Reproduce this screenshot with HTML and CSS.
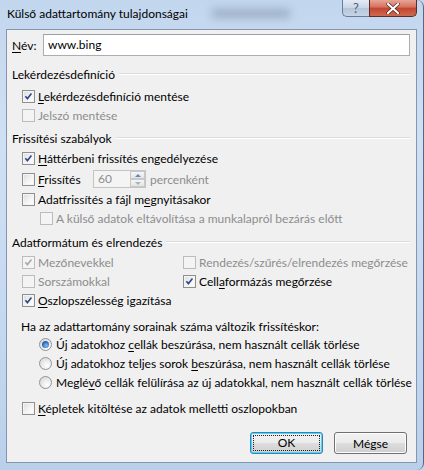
FILE: index.html
```html
<!DOCTYPE html>
<html lang="hu">
<head>
  <meta charset="UTF-8" />
  <title>Külső adattartomány tulajdonságai</title>
  <link rel="stylesheet" href="styles.css">
</head>
<body>
  <div class="window">
    <div class="titlebar">
      <span class="title">Külső adattartomány tulajdonságai</span>
      <span class="glass-blur"></span>
      <div class="caption-btns">
        <span class="cap-help">?</span>
        <span class="cap-close">
          <svg width="14" height="11" viewBox="0 0 14 11">
            <path d="M2 1 L12 10 M12 1 L2 10" stroke="#4b2020" stroke-width="3.4" stroke-linecap="round" />
            <path d="M2 1 L12 10 M12 1 L2 10" stroke="#fff" stroke-width="2.2" stroke-linecap="round" />
          </svg>
        </span>
      </div>
    </div>

    <div class="client">
      <div class="name-row">
        <label class="name-label"><u>N</u>év:</label>
        <div class="textbox">www.bing</div>
      </div>

      <div class="group-title s1"><span>Lekérdezésdefiníció</span></div>
      <div class="row ind1 first">
        <span class="cb checked"><svg viewBox="0 0 13 13"><path d="M2.8 6.2 L5.2 9 L10 3" /></svg></span>
        <span><u>L</u>ekérdezésdefiníció mentése</span>
      </div>
      <div class="row ind1 disabled">
        <span class="cb"></span>
        <span>Jelszó mentése</span>
      </div>

      <div class="group-title s2"><span>Frissítési szabályok</span></div>
      <div class="row ind1 first2">
        <span class="cb checked"><svg viewBox="0 0 13 13"><path d="M2.8 6.2 L5.2 9 L10 3" /></svg></span>
        <span><u>H</u>áttérbeni frissítés engedélyezése</span>
      </div>
      <div class="row ind1 spin-row">
        <span class="cb"></span>
        <span class="spin-label"><u>F</u>rissítés</span>
        <div class="spinner">
          <span class="spin-value">60</span>
          <div class="spin-btns">
            <span class="spin-up"></span>
            <span class="spin-down"></span>
          </div>
        </div>
        <span class="muted">percenként</span>
      </div>
      <div class="row ind1">
        <span class="cb"></span>
        <span>Adatfrissítés a fájl m<u>e</u>gnyitásakor</span>
      </div>
      <div class="row ind2 disabled">
        <span class="cb"></span>
        <span>A külső adatok eltávolítása a munkalapról bezárás előtt</span>
      </div>

      <div class="group-title s3"><span>Adatformátum és elrendezés</span></div>
      <div class="grid-rows">
        <div class="row ind1 disabled">
          <span class="cb checked"><svg viewBox="0 0 13 13"><path d="M2.8 6.2 L5.2 9 L10 3" /></svg></span>
          <span>Mezőnevekkel</span>
        </div>
        <div class="row disabled">
          <span class="cb"></span>
          <span>Rendezés/szűrés/elrendezés megőrzése</span>
        </div>
        <div class="row ind1 disabled">
          <span class="cb"></span>
          <span>Sorszámokkal</span>
        </div>
        <div class="row">
          <span class="cb checked"><svg viewBox="0 0 13 13"><path d="M2.8 6.2 L5.2 9 L10 3" /></svg></span>
          <span>Cell<u>a</u>formázás megőrzése</span>
        </div>
        <div class="row ind1">
          <span class="cb checked"><svg viewBox="0 0 13 13"><path d="M2.8 6.2 L5.2 9 L10 3" /></svg></span>
          <span><u>O</u>szlopszélesség igazítása</span>
        </div>
      </div>

      <div class="rows-note">Ha az adattartomány sorainak száma változik frissítéskor:</div>
      <div class="row ind3">
        <span class="rb selected"></span>
        <span>Új adatokhoz <u>c</u>ellák beszúrása, nem használt cellák törlése</span>
      </div>
      <div class="row ind3">
        <span class="rb"></span>
        <span>Új adatokhoz teljes sorok <u>b</u>eszúrása, nem használt cellák törlése</span>
      </div>
      <div class="row ind3">
        <span class="rb"></span>
        <span>Meglé<u>v</u>ő cellák felülírása az új adatokkal, nem használt cellák törlése</span>
      </div>

      <div class="row ind1 formulas">
        <span class="cb"></span>
        <span><u>K</u>épletek kitöltése az adatok melletti oszlopokban</span>
      </div>

      <div class="button-bar">
        <button class="btn default"><span>OK</span></button>
        <button class="btn">Mégse</button>
      </div>
    </div>
  </div>
</body>
</html>
```

FILE: styles.css
```css
body {
  margin: 0;
  font-family: Lato, "Segoe UI", sans-serif;
  font-size: 12px;
  color: #000;
  background: #c3d7ef;
}

.window {
  width: 424px;
  height: 470px;
  box-sizing: border-box;
  display: flex;
  flex-direction: column;
  position: relative;
  overflow: hidden;
  background: linear-gradient(to bottom, #c2d6ee, #cfe0f4 30%, #c4d8f0 70%, #bad0ea);
  border-right: 1px solid #53698a;
  border-radius: 0 7px 7px 0;
}

.titlebar {
  height: 29px;
  display: flex;
  align-items: flex-start;
  position: relative;
}

.title {
  padding-left: 7px;
  line-height: 28px;
  color: #000;
}

.glass-blur {
  position: absolute;
  left: 212px;
  top: 9px;
  width: 78px;
  height: 9px;
  background: #7d8fa6;
  filter: blur(4px);
  opacity: 0.55;
}

.caption-btns {
  margin-left: auto;
  margin-right: 6px;
  display: flex;
  height: 18px;
}

.cap-help {
  width: 27px;
  height: 17px;
  box-sizing: border-box;
  border: 1px solid #6a7d97;
  border-top: none;
  border-right: none;
  border-radius: 0 0 0 5px;
  background: linear-gradient(to bottom, #e3ebf5, #c9d6e6 50%, #b5c5d9 51%, #c6d4e5);
  color: #4f5f78;
  font-size: 13px;
  text-align: center;
  line-height: 16px;
}

.cap-close {
  width: 48px;
  height: 17px;
  box-sizing: border-box;
  border: 1px solid #5e2b2b;
  border-top: none;
  border-radius: 0 0 5px 0;
  background: linear-gradient(to bottom, #e8a595, #d6705e 45%, #c24431 50%, #cf6a4f 100%);
  display: flex;
  align-items: center;
  justify-content: center;
}

.client {
  margin: 0 6px 0 6px;
  height: 434px;
  box-sizing: border-box;
  border: 1px solid #8496ae;
  background: #f0f0f0;
  padding: 0 6px 0 5px;
}

u {
  text-decoration: underline;
  text-underline-offset: 2px;
}

.name-row {
  margin-top: 4px;
  height: 22px;
  display: flex;
  align-items: center;
}

.name-label {
  width: 31px;
}

.textbox {
  flex: 1;
  height: 22px;
  box-sizing: border-box;
  border: 1px solid #abadb3;
  border-top-color: #9aa0a8;
  background: #fff;
  padding-left: 4px;
  line-height: 19px;
}

.group-title {
  height: 16px;
  display: flex;
  align-items: center;
  gap: 4px;
}

.group-title::after {
  content: "";
  flex: 1;
  height: 1px;
  background: #dcdcdc;
  border-bottom: 1px solid #fff;
}

.group-title.s1 { margin-top: 10px; }
.group-title.s2 { margin-top: 5px; }
.group-title.s3 { margin-top: 6px; }

.row {
  height: 19px;
  display: flex;
  align-items: center;
  white-space: nowrap;
}

.row.first { margin-top: 5px; }
.row.first2 { margin-top: 3px; }

.ind1 { padding-left: 10px; }
.ind2 { padding-left: 28px; }
.ind3 { padding-left: 27px; }

.cb {
  width: 13px;
  height: 13px;
  box-sizing: border-box;
  border: 1px solid #8e8f8f;
  background: linear-gradient(135deg, #dcdcdc, #f6f6f6 60%, #fff);
  box-shadow: inset 0 0 0 1px #f4f4f4;
  margin-right: 3px;
  flex: none;
  display: flex;
}

.cb svg {
  width: 11px;
  height: 11px;
}

.cb path {
  fill: none;
  stroke: #31498e;
  stroke-width: 1.9;
}

.disabled {
  color: #8d8d8d;
}

.disabled .cb {
  border-color: #bcbcbc;
  background: #f4f4f4;
  box-shadow: none;
}

.disabled .cb path {
  stroke: #aaaaaa;
}

.spin-row {
  height: 22px;
}

.spin-label {
  width: 55px;
}

.spinner {
  width: 53px;
  height: 18px;
  box-sizing: border-box;
  border: 1px solid #c4c4c4;
  background: #f4f4f4;
  display: flex;
  margin-right: 4px;
}

.spin-value {
  flex: 1;
  padding-left: 4px;
  color: #8d8d8d;
  line-height: 16px;
}

.spin-btns {
  width: 15px;
  display: flex;
  flex-direction: column;
}

.spin-up,
.spin-down {
  flex: 1;
  border: 1px solid #c8c8c8;
  background: linear-gradient(to bottom, #f6f6f6, #e4e4e4);
  position: relative;
}

.spin-up::after,
.spin-down::after {
  content: "";
  position: absolute;
  left: 4px;
  top: 2px;
  border-left: 3px solid transparent;
  border-right: 3px solid transparent;
}

.spin-up::after {
  border-bottom: 3px solid #5b8ac7;
}

.spin-down::after {
  border-top: 3px solid #a9b3c0;
}

.muted {
  color: #8d8d8d;
}

.grid-rows {
  margin-top: 3px;
  display: grid;
  grid-template-columns: 171px 1fr;
}

.rows-note {
  margin-top: 9px;
  height: 16px;
  line-height: 16px;
  padding-left: 9px;
}

.rb {
  width: 13px;
  height: 13px;
  box-sizing: border-box;
  border-radius: 50%;
  border: 1px solid #939393;
  background: radial-gradient(circle at 65% 70%, #ffffff, #e0e0e0 70%, #cfcfcf);
  margin-right: 4px;
  flex: none;
  position: relative;
}

.rb.selected::after {
  content: "";
  position: absolute;
  left: 2px;
  top: 2px;
  width: 7px;
  height: 7px;
  border-radius: 50%;
  background: radial-gradient(circle at 60% 65%, #7fc4f4, #2a64b8 60%, #1b3f84);
}

.row.formulas {
  margin-top: 7px;
}

.button-bar {
  margin-top: 14px;
  display: flex;
  justify-content: flex-end;
  gap: 11px;
  padding-right: 3px;
}

.btn {
  width: 73px;
  height: 22px;
  box-sizing: border-box;
  border: 1px solid #707070;
  border-radius: 3px;
  background: linear-gradient(to bottom, #f2f2f2, #ebebeb 50%, #dddddd 51%, #cfcfcf);
  font-family: inherit;
  font-size: 12px;
  color: #000;
  padding: 0;
  box-shadow: inset 0 0 0 1px #fcfcfc;
}

.btn.default {
  border-color: #3c7fb1;
  box-shadow: inset 0 0 0 1px #48d8fb;
  padding: 2px;
}

.btn.default span {
  display: block;
  height: 100%;
  box-sizing: border-box;
  border: 1px dotted #222;
  line-height: 14px;
}
```
